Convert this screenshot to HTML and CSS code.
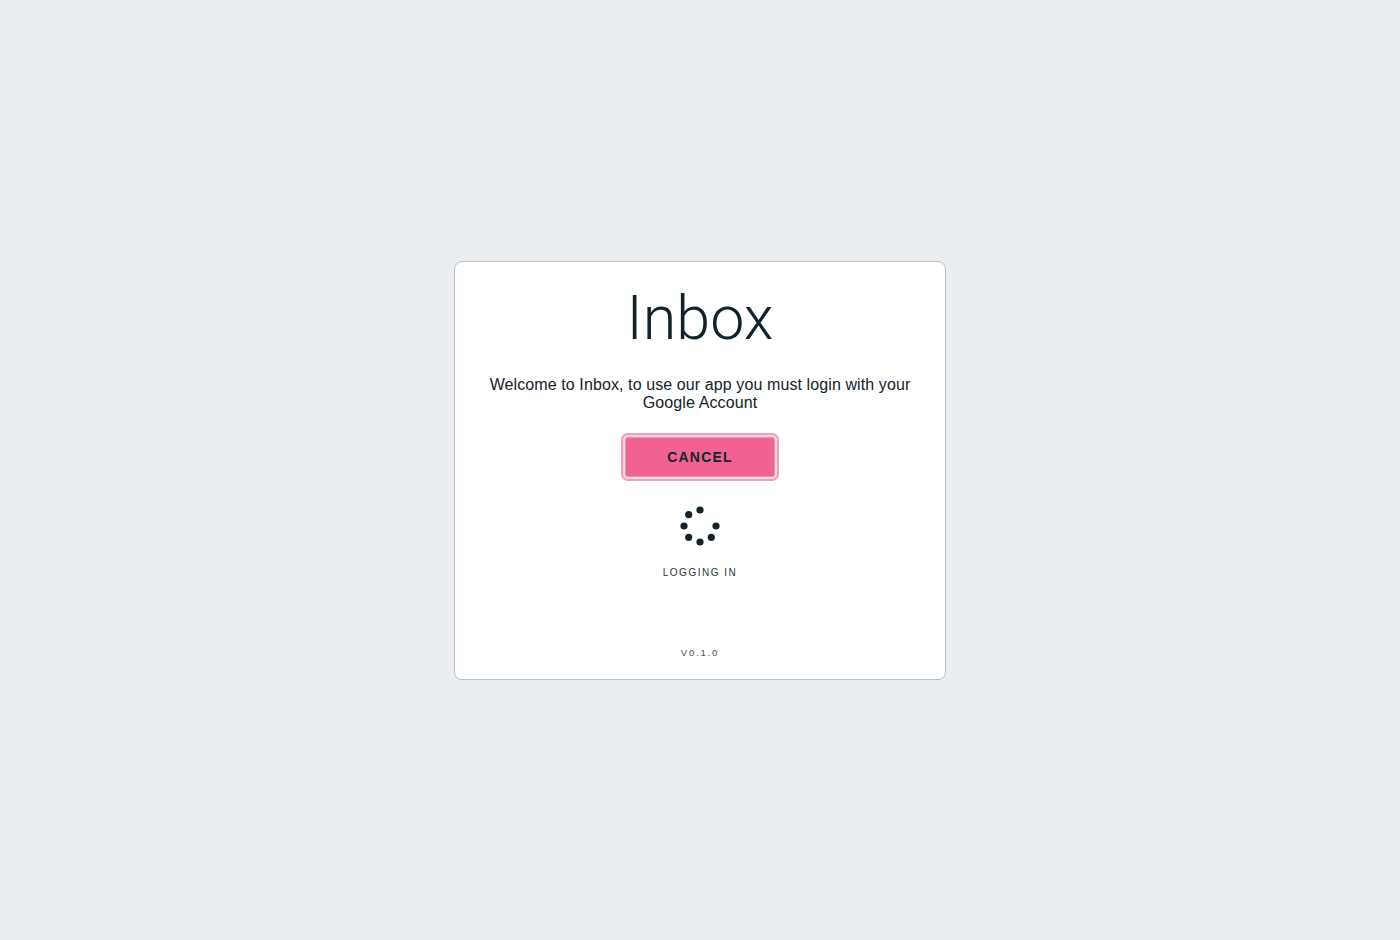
FILE: index.html
```html
<!DOCTYPE html>
<html>
<head>
<meta charset="utf-8">
<link rel="stylesheet" href="styles.css">
</head>
<body>
<div class="page">
  <div class="card">
    <h1 class="title">Inbox</h1>
    <p class="intro">Welcome to Inbox, to use our app you must login with your Google Account</p>
    <button class="cancel">CANCEL</button>
    <div class="spinner">
      <svg width="44" height="44" viewBox="0 0 44 44">
        <g fill="#15232b">
          <circle cx="22" cy="6" r="3.6"/>
          <circle cx="10.7" cy="10.7" r="3.6"/>
          <circle cx="6" cy="22" r="3.6"/>
          <circle cx="10.7" cy="33.3" r="3.6"/>
          <circle cx="22" cy="38" r="3.6"/>
          <circle cx="33.3" cy="33.3" r="3.6"/>
          <circle cx="38" cy="22" r="3.6"/>
        </g>
      </svg>
    </div>
    <div class="status">LOGGING IN</div>
    <div class="version">V0.1.0</div>
  </div>
</div>
</body>
</html>
```
FILE: styles.css
```css
html, body {
  margin: 0;
  padding: 0;
  height: 100%;
}
body {
  background: #eaeef1;
  font-family: "Liberation Sans", Arial, sans-serif;
  color: #15232b;
}
.page {
  height: 100%;
  display: flex;
  align-items: center;
  justify-content: center;
}
.card {
  box-sizing: border-box;
  width: 492px;
  height: 419px;
  background: #fff;
  border: 1px solid #b7c0c7;
  border-radius: 8px;
  display: flex;
  flex-direction: column;
  align-items: center;
  padding: 21px 30px 0;
}
.title {
  margin: 0;
  font-family: Roboto, "Liberation Sans", sans-serif;
  font-weight: 300;
  font-size: 61px;
  line-height: 70px;
  color: #10222a;
}
.intro {
  margin: 23px 0 0;
  font-size: 16px;
  letter-spacing: 0.1px;
  line-height: 18px;
  text-align: center;
  color: #15232b;
}
.cancel {
  margin-top: 25px;
  width: 150px;
  height: 40px;
  background: #f06292;
  border: 1px solid #c9a3b1;
  border-radius: 3px;
  box-shadow: 0 0 0 2px #fbd3e2, 0 0 0 4px #f59cc0;
  font-family: "Liberation Sans", Arial, sans-serif;
  font-weight: 700;
  font-size: 14px;
  letter-spacing: 1.2px;
  color: #15232b;
  padding: 0;
  cursor: pointer;
}
.spinner {
  margin-top: 27px;
  width: 44px;
  height: 44px;
}
.spinner svg {
  display: block;
}
.status {
  margin-top: 19px;
  font-size: 10px;
  letter-spacing: 1.5px;
  color: #2a3339;
}
.version {
  margin-top: 69px;
  font-size: 9.5px;
  letter-spacing: 1.8px;
  color: #4a5358;
}
```
